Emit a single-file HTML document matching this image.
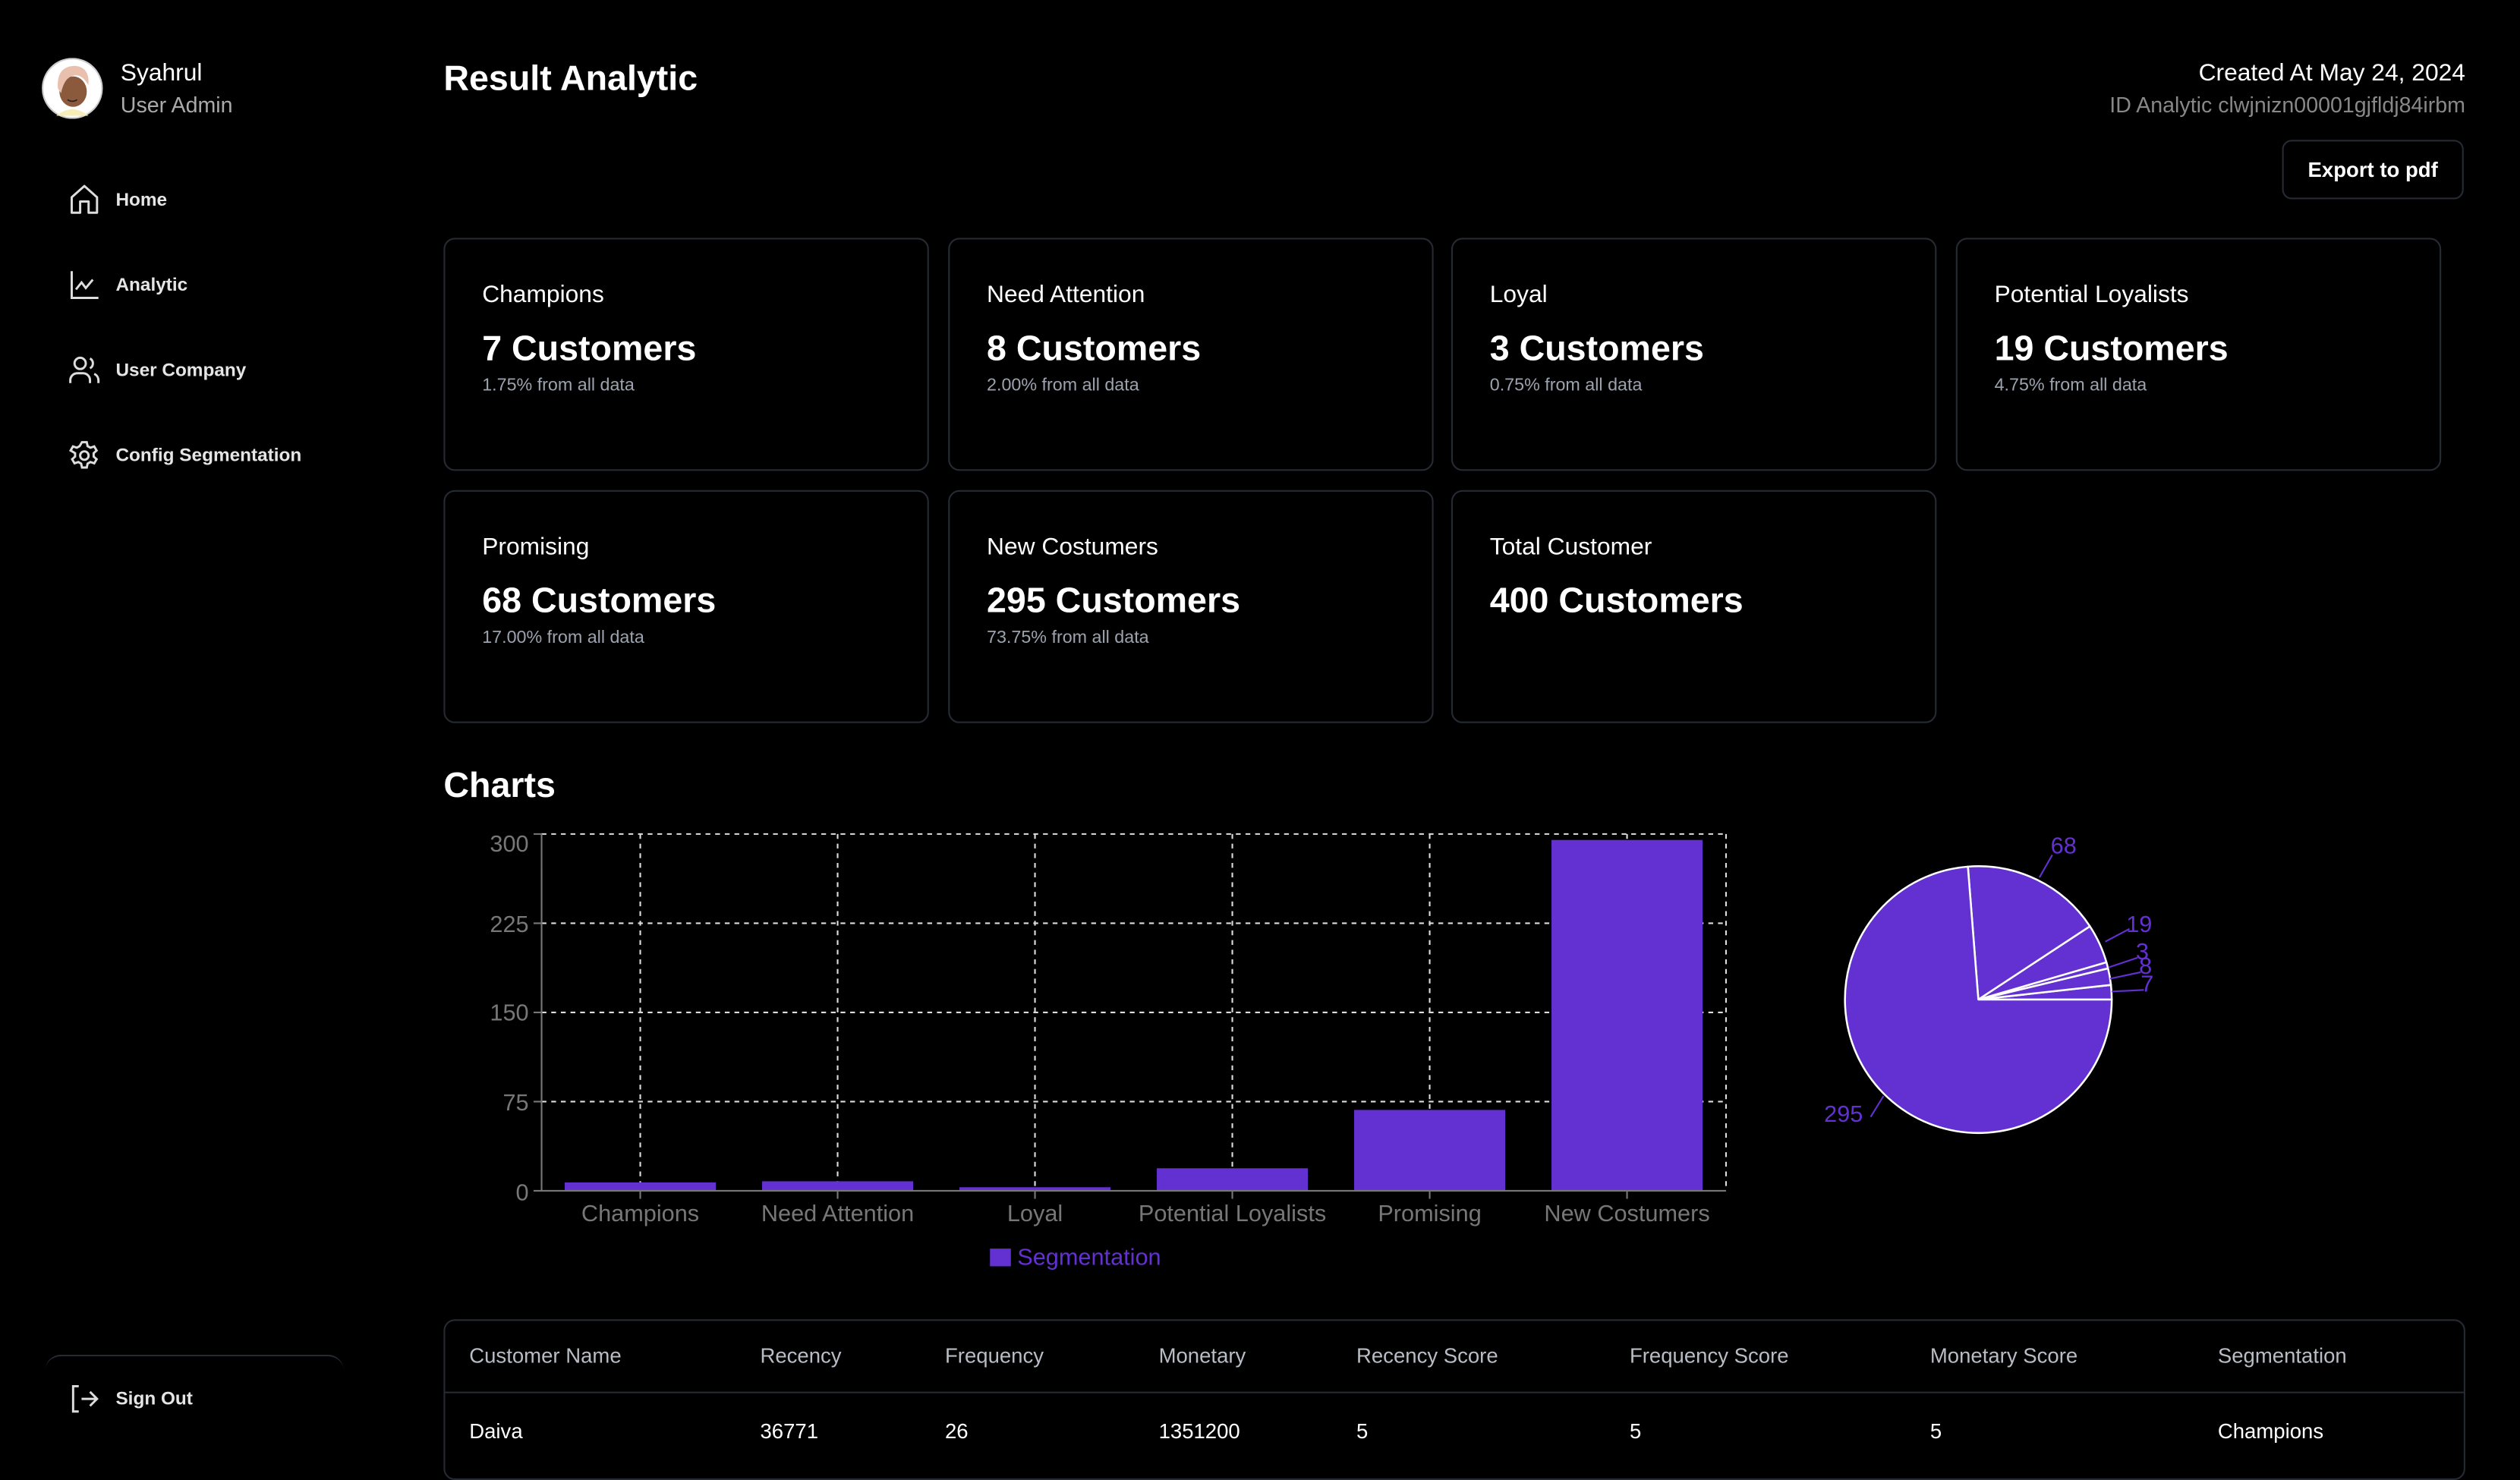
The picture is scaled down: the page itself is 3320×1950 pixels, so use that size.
<!DOCTYPE html>
<html><head><meta charset="utf-8"><style>
html,body{margin:0;padding:0;background:#000;width:3320px;height:1930px;overflow:hidden}
#r{position:absolute;left:0;top:0;width:1568px;height:912px;transform:scale(2.1173);transform-origin:0 0;font-family:"Liberation Sans",sans-serif;color:#fff}
.a{position:absolute;white-space:nowrap}
.card{position:absolute;width:302px;height:145px;border:1px solid #262a33;border-radius:7px;box-sizing:border-box}
.card .t{position:absolute;left:23px;top:26px;font-size:15px}
.card .v{position:absolute;left:23px;top:55px;font-size:22px;font-weight:bold}
.card .s{position:absolute;left:23px;top:85px;font-size:11px;color:#9ca3af}
.nav{position:absolute;left:42px;font-size:11.5px;font-weight:bold;color:#e5e5e5;display:flex;align-items:center;gap:9px}
.nav svg{width:21px;height:21px}
.h{top:836px;font-size:13px;color:#b8bcc4}
.d{top:883px;font-size:13px}
</style></head><body><div id="r">
<svg class="a" style="left:26px;top:36px" width="38" height="38" viewBox="0 0 38 38">
<circle cx="19" cy="19" r="18.5" fill="#fff" stroke="#ccc"/>
<path d="M9 36 Q19 28 29 36 Z" fill="#f6eeb8"/>
<ellipse cx="19.5" cy="21" rx="8.5" ry="9.5" fill="#8b5a3c"/>
<path d="M10 19 Q9 5 21 5 Q30 6 29 17 Q25 10 20 11 Q14 12 12 22 Z" fill="#e8c0ad"/>
<path d="M16 26 Q19 28 22 26" stroke="#222" fill="none" stroke-width=".8"/>
</svg>
<div class="a" style="left:75px;top:37px;font-size:15px">Syahrul</div>
<div class="a" style="left:75px;top:58px;font-size:13.5px;color:#aaa">User Admin</div>

<div class="nav" style="top:114px"><svg viewBox="0 0 24 24" fill="none" stroke="#ddd" stroke-width="1.6" stroke-linejoin="round"><path d="M3 10 L12 2 L21 10 V21 H15 V13 H9 V21 H3 Z"/></svg>Home</div>
<div class="nav" style="top:167px"><svg viewBox="0 0 24 24" fill="none" stroke="#ddd" stroke-width="1.6"><path d="M3 2 V21 H22 M6 15 L10 10 L13 14 L18 8"/></svg>Analytic</div>
<div class="nav" style="top:220px"><svg viewBox="0 0 24 24" fill="none" stroke="#ddd" stroke-width="1.6"><circle cx="9" cy="7" r="4"/><path d="M2 21 V19 A5 5 0 0 1 7 14 H11 A5 5 0 0 1 16 19 V21 M16 3.5 A4 4 0 0 1 16 10.5 M19 14.5 A5 5 0 0 1 22 19 V21"/></svg>User Company</div>
<div class="nav" style="top:273px"><svg viewBox="0 0 24 24" fill="none" stroke="#ddd" stroke-width="1.6"><circle cx="12" cy="12" r="3"/><path d="M10.3 2.5h3.4l.6 2.8 2 1.1 2.7-.9 1.7 2.9-2.1 1.9v2.4l2.1 1.9-1.7 2.9-2.7-.9-2 1.1-.6 2.8h-3.4l-.6-2.8-2-1.1-2.7.9-1.700-2.9 2.1-1.9v-2.4L2.2 8.4l1.7-2.9 2.7.9 2-1.1z"/></svg>Config Segmentation</div>

<div class="a" style="left:28px;top:843px;width:186px;height:30px;border-top:1px solid #262a33;border-radius:10px 10px 0 0"></div>
<div class="nav" style="top:860px"><svg viewBox="0 0 24 24" fill="none" stroke="#ddd" stroke-width="1.6"><path d="M8 3 H4 V21 H8 M10 12 H21 M16 7 L21 12 L16 17"/></svg>Sign Out</div>

<div class="a" style="left:276px;top:36px;font-size:22px;font-weight:bold">Result Analytic</div>
<div class="a" style="right:34px;top:37px;font-size:15px">Created At May 24, 2024</div>
<div class="a" style="right:34px;top:58px;font-size:13.5px;color:#888">ID Analytic clwjnizn00001gjfldj84irbm</div>
<div class="a" style="left:1420px;top:87px;width:113px;height:37px;border:1px solid #262a33;border-radius:6px;box-sizing:border-box;font-size:13px;font-weight:bold;display:flex;align-items:center;justify-content:center">Export to pdf</div>

<div class="card" style="left:276px;top:148px"><div class="t">Champions</div><div class="v">7 Customers</div><div class="s">1.75% from all data</div></div>
<div class="card" style="left:590px;top:148px"><div class="t">Need Attention</div><div class="v">8 Customers</div><div class="s">2.00% from all data</div></div>
<div class="card" style="left:903px;top:148px"><div class="t">Loyal</div><div class="v">3 Customers</div><div class="s">0.75% from all data</div></div>
<div class="card" style="left:1217px;top:148px"><div class="t">Potential Loyalists</div><div class="v">19 Customers</div><div class="s">4.75% from all data</div></div>
<div class="card" style="left:276px;top:305px"><div class="t">Promising</div><div class="v">68 Customers</div><div class="s">17.00% from all data</div></div>
<div class="card" style="left:590px;top:305px"><div class="t">New Costumers</div><div class="v">295 Customers</div><div class="s">73.75% from all data</div></div>
<div class="card" style="left:903px;top:305px"><div class="t">Total Customer</div><div class="v">400 Customers</div></div>

<div class="a" style="left:276px;top:476px;font-size:22px;font-weight:bold">Charts</div>

<svg class="a" style="left:280px;top:500px" width="1100" height="300" viewBox="280 500 1100 300" font-family="Liberation Sans, sans-serif">
<line x1="337" y1="519" x2="1074" y2="519" stroke="#ddd" stroke-dasharray="3 3"/>
<line x1="337" y1="574.5" x2="1074" y2="574.5" stroke="#ddd" stroke-dasharray="3 3"/>
<line x1="337" y1="630" x2="1074" y2="630" stroke="#ddd" stroke-dasharray="3 3"/>
<line x1="337" y1="685.5" x2="1074" y2="685.5" stroke="#ddd" stroke-dasharray="3 3"/>
<line x1="1074" y1="519" x2="1074" y2="741" stroke="#ddd" stroke-dasharray="3 3"/>
<line x1="398.4" y1="519" x2="398.4" y2="741" stroke="#ddd" stroke-dasharray="3 3"/>
<line x1="521.2" y1="519" x2="521.2" y2="741" stroke="#ddd" stroke-dasharray="3 3"/>
<line x1="644" y1="519" x2="644" y2="741" stroke="#ddd" stroke-dasharray="3 3"/>
<line x1="766.8" y1="519" x2="766.8" y2="741" stroke="#ddd" stroke-dasharray="3 3"/>
<line x1="889.6" y1="519" x2="889.6" y2="741" stroke="#ddd" stroke-dasharray="3 3"/>
<line x1="1012.4" y1="519" x2="1012.4" y2="741" stroke="#ddd" stroke-dasharray="3 3"/>
<rect x="351.4" y="735.8" width="94" height="5.2" fill="#6330d1"/>
<rect x="474.2" y="735.1" width="94" height="5.9" fill="#6330d1"/>
<rect x="597" y="738.8" width="94" height="2.2" fill="#6330d1"/>
<rect x="719.8" y="727" width="94" height="14" fill="#6330d1"/>
<rect x="842.6" y="690.7" width="94" height="50.3" fill="#6330d1"/>
<rect x="965.4" y="522.7" width="94" height="218.3" fill="#6330d1"/>
<path d="M337 519V741H1074M332 519H337M332 574.5H337M332 630H337M332 685.5H337M332 741H337M398.4 741V746M521.2 741V746M644 741V746M766.8 741V746M889.6 741V746M1012.4 741V746" stroke="#777" fill="none"/>
<g fill="#777" font-size="14.5" text-anchor="end">
<text x="329" y="530">300</text><text x="329" y="580">225</text><text x="329" y="635">150</text><text x="329" y="691">75</text><text x="329" y="747">0</text>
</g>
<g fill="#777" font-size="14.5" text-anchor="middle">
<text x="398.4" y="760">Champions</text><text x="521.2" y="760">Need Attention</text><text x="644" y="760">Loyal</text><text x="766.8" y="760">Potential Loyalists</text><text x="889.6" y="760">Promising</text><text x="1012.4" y="760">New Costumers</text>
</g>
<rect x="616" y="777" width="13" height="11" fill="#6330d1"/>
<text x="633" y="787" fill="#6330d1" font-size="14.5">Segmentation</text>

<g fill="#6330d1" stroke="#fff" stroke-width="1.2" stroke-linejoin="round">
<path d="M1231 622 L1314 622 A83 83 0 0 0 1313.5 612.9 Z"/>
<path d="M1231 622 L1313.5 612.9 A83 83 0 0 0 1311.7 602.6 Z"/>
<path d="M1231 622 L1311.7 602.6 A83 83 0 0 0 1310.7 598.8 Z"/>
<path d="M1231 622 L1310.7 598.8 A83 83 0 0 0 1300.4 576.4 Z"/>
<path d="M1231 622 L1300.4 576.4 A83 83 0 0 0 1224.5 539.3 Z"/>
<path d="M1231 622 L1224.5 539.3 A83 83 0 1 0 1314 622 Z"/>
</g>
<path d="M1269 546 L1277 532M1310 586 L1325 578M1312 602 L1330 596M1313 609 L1332 605M1314 617 L1334 616M1172 682 L1164 695" stroke="#6330d1" fill="none"/>
<g fill="#6330d1" font-size="14.5">
<text x="1276" y="531">68</text><text x="1323" y="580">19</text><text x="1329" y="597">3</text><text x="1331" y="606">8</text><text x="1332" y="617">7</text><text x="1135" y="698">295</text>
</g>
</svg>

<div class="a" style="left:276px;top:821px;width:1258px;height:100px;border:1px solid #262a33;border-radius:7px;box-sizing:border-box"></div>
<div class="a" style="left:277px;top:866px;width:1256px;height:1px;background:#262a33"></div>
<div class="a h" style="left:292px">Customer Name</div>
<div class="a h" style="left:473px">Recency</div>
<div class="a h" style="left:588px">Frequency</div>
<div class="a h" style="left:721px">Monetary</div>
<div class="a h" style="left:844px">Recency Score</div>
<div class="a h" style="left:1014px">Frequency Score</div>
<div class="a h" style="left:1201px">Monetary Score</div>
<div class="a h" style="left:1380px">Segmentation</div>
<div class="a d" style="left:292px">Daiva</div>
<div class="a d" style="left:473px">36771</div>
<div class="a d" style="left:588px">26</div>
<div class="a d" style="left:721px">1351200</div>
<div class="a d" style="left:844px">5</div>
<div class="a d" style="left:1014px">5</div>
<div class="a d" style="left:1201px">5</div>
<div class="a d" style="left:1380px">Champions</div>
</div></body></html>
